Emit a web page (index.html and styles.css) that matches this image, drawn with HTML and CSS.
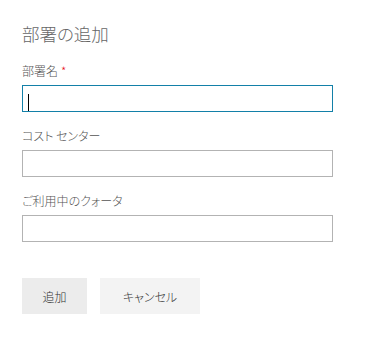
FILE: index.html
```html
<!DOCTYPE html>
<html lang="ja">
<head>
<meta charset="utf-8">
<title>部署の追加</title>
<link rel="stylesheet" href="styles.css">
</head>
<body>
<div class="panel">
  <h1 class="title">部署の追加</h1>
  <div class="field">
    <div class="label">部署名<span class="req">*</span></div>
    <div class="input focused"><span class="caret"></span></div>
  </div>
  <div class="field">
    <div class="label">コスト センター</div>
    <div class="input"></div>
  </div>
  <div class="field">
    <div class="label">ご利用中のクォータ</div>
    <div class="input"></div>
  </div>
  <div class="actions">
    <button class="btn btn-primary">追加</button>
    <button class="btn btn-secondary">キャンセル</button>
  </div>
</div>
</body>
</html>
```

FILE: styles.css
```css
html, body {
  margin: 0;
  padding: 0;
  background: #ffffff;
}
body {
  font-family: "Noto Sans CJK JP", "Noto Sans", sans-serif;
  font-feature-settings: "palt";
  color: #666666;
}
.panel {
  padding: 22px 0 0 22px;
  width: 311px;
}
.title {
  margin: 0;
  font-size: 17.5px;
  line-height: 24px;
  font-weight: 300;
  color: #666666;
}
.field {
  margin-top: 15px;
}
.field + .field {
  margin-top: 14px;
}
.label {
  font-size: 12px;
  line-height: 20px;
  margin-bottom: 4px;
  font-weight: 300;
  color: #555555;
}
.req {
  color: #e81123;
  margin-left: 3px;
}
.input {
  box-sizing: border-box;
  height: 27px;
  border: 1px solid #b3b3b3;
  background: #ffffff;
  display: flex;
  align-items: center;
  padding-left: 5px;
}
.input.focused {
  border-color: #1380a8;
}
.caret {
  width: 1px;
  height: 17px;
  background: #000000;
  margin-top: 7px;
}
.actions {
  display: flex;
  gap: 13px;
  margin-top: 36px;
}
.btn {
  height: 36px;
  border: none;
  font-family: inherit;
  font-feature-settings: "palt";
  font-size: 12px;
  font-weight: 300;
  color: #333333;
  padding: 0;
  cursor: pointer;
}
.btn-primary {
  width: 65px;
  background: #ececec;
}
.btn-secondary {
  width: 100px;
  background: #f3f3f3;
}
```
